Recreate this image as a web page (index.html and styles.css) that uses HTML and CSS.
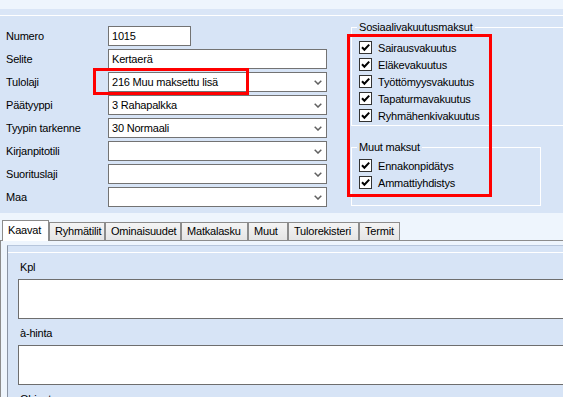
FILE: index.html
```html
<!DOCTYPE html>
<html lang="fi">
<head>
  <meta charset="UTF-8" />
  <title>Palkkalaji</title>
  <link rel="stylesheet" href="styles.css">
</head>
<body>
  <svg width="0" height="0" style="position:absolute">
    <symbol id="tick" viewBox="0 0 13 13">
      <rect x="0.5" y="0.5" width="12" height="12" fill="#fff" stroke="#333"/>
      <path d="M3 6.3 L5.4 8.8 L10.2 3.6" fill="none" stroke="#000" stroke-width="2"/>
    </symbol>
    <symbol id="chevron" viewBox="0 0 8 5">
      <path d="M0.7 0.7 L4 4 L7.3 0.7" fill="none" stroke="#606060" stroke-width="1.5"/>
    </symbol>
  </svg>

  <div class="titlebar"></div>
  <div class="titleband"></div>

  <div class="form">
    <div class="fields">
      <label>Numero</label><div class="box short">1015</div>
      <label>Selite</label><div class="box">Kertaerä</div>
      <label>Tulolaji</label><div class="box">216 Muu maksettu lisä<svg class="arrow"><use href="#chevron"/></svg></div>
      <label>Päätyyppi</label><div class="box">3 Rahapalkka<svg class="arrow"><use href="#chevron"/></svg></div>
      <label>Tyypin tarkenne</label><div class="box">30 Normaali<svg class="arrow"><use href="#chevron"/></svg></div>
      <label>Kirjanpitotili</label><div class="box"><span></span><svg class="arrow"><use href="#chevron"/></svg></div>
      <label>Suorituslaji</label><div class="box"><span></span><svg class="arrow"><use href="#chevron"/></svg></div>
      <label>Maa</label><div class="box"><span></span><svg class="arrow"><use href="#chevron"/></svg></div>
    </div>

    <div class="groups">
      <fieldset class="group wide">
        <legend>Sosiaalivakuutusmaksut</legend>
        <div class="check"><svg><use href="#tick"/></svg>Sairausvakuutus</div>
        <div class="check"><svg><use href="#tick"/></svg>Eläkevakuutus</div>
        <div class="check"><svg><use href="#tick"/></svg>Työttömyysvakuutus</div>
        <div class="check"><svg><use href="#tick"/></svg>Tapaturmavakuutus</div>
        <div class="check"><svg><use href="#tick"/></svg>Ryhmähenkivakuutus</div>
      </fieldset>
      <fieldset class="group narrow">
        <legend>Muut maksut</legend>
        <div class="check"><svg><use href="#tick"/></svg>Ennakonpidätys</div>
        <div class="check"><svg><use href="#tick"/></svg>Ammattiyhdistys</div>
      </fieldset>
    </div>

    <!-- punaiset korostukset -->
    <div class="mark mark-tulolaji"></div>
    <div class="mark mark-maksut"></div>
  </div>

  <div class="tabs">
    <div class="tabrow">
      <div class="tab active" style="width:47px">Kaavat</div>
      <div class="tab" style="width:56px">Ryhmätilit</div>
      <div class="tab" style="width:76px">Ominaisuudet</div>
      <div class="tab" style="width:67px">Matkalasku</div>
      <div class="tab" style="width:40px">Muut</div>
      <div class="tab" style="width:71px">Tulorekisteri</div>
      <div class="tab" style="width:41px">Termit</div>
    </div>
    <div class="page">
      <div class="panel">
        <div class="panel-body">
          <div class="cap">Kpl</div>
          <div class="memo"></div>
          <div class="cap">à-hinta</div>
          <div class="memo"></div>
          <div class="cap">Ohjeet</div>
        </div>
      </div>
    </div>
  </div>
</body>
</html>
```

FILE: styles.css
```css
body {
  margin: 0;
  width: 563px;
  height: 397px;
  overflow: hidden;
  background: #d7e4f6;
  font-family: "Liberation Sans", Arial, sans-serif;
  font-size: 11px;
  letter-spacing: -0.2px;
  color: #000;
}

.titlebar {
  height: 9px;
  background: #eef5fd;
}

.titleband {
  height: 6px;
  background: #dae6f7;
  border-bottom: 1px solid #fff;
}

.form {
  position: relative;
  display: flex;
  height: 197px;
}

.fields {
  display: grid;
  grid-template-columns: 102px 219px;
  grid-auto-rows: 20px;
  row-gap: 3px;
  padding: 10px 0 0 6px;
  align-content: start;
}

.fields label {
  line-height: 20px;
}

.box {
  box-sizing: border-box;
  height: 20px;
  border: 1px solid #737373;
  background: #fff;
  padding: 0 4px 0 3px;
  display: flex;
  align-items: center;
  justify-content: space-between;
}

.short {
  width: 83px;
}

.arrow {
  width: 8px;
  height: 5px;
}

.groups {
  flex: none;
  margin-left: 24px;
  padding-top: 5px;
}

.group {
  margin: 0;
  padding: 5px 0 1px 7px;
  border: 1px solid #fff;
  min-width: 0;
  box-sizing: border-box;
}

.group legend {
  padding: 0 2px;
  margin-left: -2px;
  line-height: 13px;
}

.wide {
  width: 240px;
}

.narrow {
  width: 190px;
  margin-top: 15px;
  padding-top: 3px;
  padding-bottom: 14px;
}

.check {
  display: flex;
  align-items: center;
  gap: 6px;
  height: 17px;
}

.check svg {
  width: 13px;
  height: 13px;
}

.mark {
  position: absolute;
  box-sizing: border-box;
  border: 3px solid #f00;
}

.mark-tulolaji {
  left: 93px;
  top: 52px;
  width: 156px;
  height: 27px;
}

.mark-maksut {
  left: 347px;
  top: 18px;
  width: 145px;
  height: 163px;
}

.tabs {
  background: #eef5fd;
  height: 184px;
}

.tabrow {
  display: flex;
  align-items: flex-end;
  box-sizing: border-box;
  height: 28px;
  padding-left: 2px;
  border-bottom: 1px solid #8c8c8c;
}

.tab {
  box-sizing: border-box;
  height: 18px;
  border: 1px solid #8c8c8c;
  border-bottom: none;
  background: linear-gradient(#f4f4f4, #e5e5e5);
  padding-left: 5px;
  line-height: 17px;
  white-space: nowrap;
}

.tab.active {
  height: 21px;
  margin-bottom: -1px;
  padding-top: 1px;
  background: #fff;
}

.page {
  border-left: 1px solid #8c8c8c;
  padding: 4px 0 0 6px;
  height: 160px;
}

.panel {
  border-left: 1px solid #8a94a4;
  border-top: 1px solid #b7c6dc;
  background: #d7e4f6;
  height: 200px;
}

.panel-body {
  margin-top: 6px;
  border-top: 1px solid #fff;
  padding: 7px 0 0 10px;
}

.cap {
  line-height: 14px;
  padding-left: 2px;
  margin-bottom: 5px;
}

.memo {
  box-sizing: border-box;
  width: 700px;
  height: 40px;
  border: 1px solid #6e6e6e;
  background: #fff;
  margin-bottom: 7px;
}
```
